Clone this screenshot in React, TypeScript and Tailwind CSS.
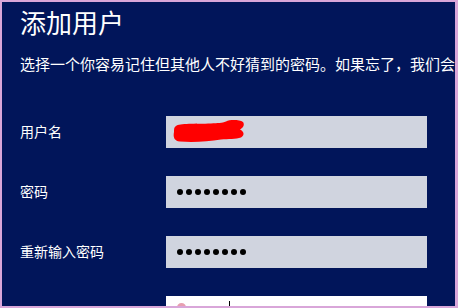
import React from 'react';

const font = { fontFamily: '"Noto Sans CJK SC", "Microsoft YaHei", sans-serif' };

const Dots: React.FC = () => (
    <div className="flex items-center gap-[3px] pl-[11px]">
        {[0, 1, 2, 3, 4, 5, 6, 7].map(i => (
            <span key={i} className="block w-[6px] h-[6px] rounded-full bg-black" />
        ))}
    </div>
);

const Scribble: React.FC = () => (
    <svg width="80" height="32" viewBox="0 0 80 32" className="absolute left-0 top-0">
        <path
            d="M10 10 C 13 7, 30 8, 45 7.5 C 52 7, 56 7, 60 5.5 C 64 3.5, 73 3.5, 77 6 C 79 9, 77 12, 74 13.5 C 78 15.5, 79 19, 75 21.5 C 70 23, 62 23, 55 23.5 C 42 25.5, 28 26.5, 14 25.5 C 8 25, 7 21, 8 16 C 8 13, 8 11, 10 10 Z"
            fill="#ff0000"
        />
    </svg>
);

const Row: React.FC<{ label: string; children: React.ReactNode; white?: boolean }> = ({ label, children, white }) => (
    <div className="flex items-center">
        <div className="w-[146px] text-[14px] leading-none text-white -mt-[3px]">{label}</div>
        <div className={`relative w-[261px] h-[32px] flex items-center ${white ? 'bg-white' : 'bg-[#d0d4df]'}`}>
            {children}
        </div>
    </div>
);

export default function App() {
    return (
        <div className="w-[458px] h-[308px] bg-[#d9a6d9] pt-[2px] pl-[2px] pr-[3px] pb-[2px]" style={font}>
            <div className="w-full h-full bg-[#01155a] overflow-hidden pl-[18px] pt-[7px]">
                <h1 className="text-[26px] leading-[26px] text-white font-normal whitespace-nowrap">添加用户</h1>
                <p className="mt-[21px] text-[15px] leading-[15px] text-white whitespace-nowrap">
                    选择一个你容易记住但其他人不好猜到的密码。如果忘了，我们会
                </p>
                <div className="mt-[45px] flex flex-col gap-[28px]">
                    <Row label="用户名">
                        <Scribble />
                    </Row>
                    <Row label="密码">
                        <Dots />
                    </Row>
                    <Row label="重新输入密码">
                        <Dots />
                    </Row>
                    <Row label="" white>
                        <span className="absolute left-[11px] top-[7px] w-[9px] h-[9px] rounded-full bg-[#e8a0b0]" />
                        <span className="absolute left-[63px] top-[5px] w-px h-[14px] bg-black" />
                    </Row>
                </div>
            </div>
        </div>
    );
}
